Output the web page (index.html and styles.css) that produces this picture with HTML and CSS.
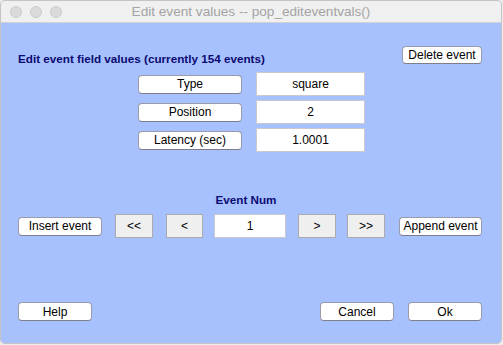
FILE: index.html
```html
<!DOCTYPE html>
<html>
<head>
    <title>Edit event values -- pop_editeventvals()</title>
    <link rel="stylesheet" href="styles.css">
</head>
<body>
    <div class="window">
        <div class="titlebar">
            <div class="lights">
                <span class="light"></span>
                <span class="light"></span>
                <span class="light"></span>
            </div>
            <div class="title">Edit event values -- pop_editeventvals()</div>
        </div>

        <div class="content">
            <!-- Заголовок и удаление -->
            <div class="top">
                <div class="heading">Edit event field values (currently 154 events)</div>
                <button class="btn delete">Delete event</button>
            </div>

            <!-- Поля события -->
            <div class="fields">
                <button class="btn">Type</button>
                <div class="field">square</div>
                <button class="btn">Position</button>
                <div class="field">2</div>
                <button class="btn">Latency (sec)</button>
                <div class="field">1.0001</div>
            </div>

            <div class="heading num-label">Event Num</div>

            <!-- Навигация -->
            <div class="nav">
                <button class="btn insert">Insert event</button>
                <button class="step first">&lt;&lt;</button>
                <button class="step prev">&lt;</button>
                <div class="field num">1</div>
                <button class="step next">&gt;</button>
                <button class="step last">&gt;&gt;</button>
                <button class="btn append">Append event</button>
            </div>

            <div class="bottom">
                <button class="btn wide">Help</button>
                <button class="btn wide cancel">Cancel</button>
                <button class="btn wide ok">Ok</button>
            </div>
        </div>
    </div>
</body>
</html>
```

FILE: styles.css
```css
body {
    margin: 0;
    background: #ededed;
    font-family: "Liberation Sans", Arial, sans-serif;
    font-size: 12px;
}
.window {
    box-sizing: border-box;
    width: 502px;
    height: 344px;
    border: 1px solid #c4c4c4;
    border-radius: 5px;
    overflow: hidden;
    background: #a7c0fe;
}
.titlebar {
    position: relative;
    height: 21px;
    background: #f0f0f0;
    border-bottom: 1px solid #d2d2d2;
}
.lights {
    display: flex;
    gap: 8px;
    padding: 5px 0 0 9px;
}
.light {
    box-sizing: border-box;
    width: 12px;
    height: 12px;
    border-radius: 50%;
    background: #dadada;
    border: 1px solid #cdcdcd;
}
.title {
    position: absolute;
    top: 0;
    left: 0;
    right: 0;
    text-align: center;
    line-height: 22px;
    font-size: 13.6px;
    color: #a4a4a4;
}
.content {
    padding: 0 0 0 17px;
}
button {
    font-family: inherit;
    font-size: 12px;
    color: #000;
    padding: 0;
    margin: 0;
}
.btn {
    box-sizing: border-box;
    height: 19px;
    background: #fff;
    border: 1px solid #9a9aa8;
    border-bottom-color: #7f7f8c;
    border-radius: 4px;
    line-height: 16px;
}
.top {
    display: flex;
    align-items: flex-end;
    margin-top: 23px;
    height: 18px;
}
.heading {
    font-weight: bold;
    color: #0b0b72;
    line-height: 14px;
    font-size: 11.7px;
}
.top .heading {
    margin-bottom: -2px;
}
.delete {
    width: 80px;
    margin-left: auto;
    margin-right: 19px;
    height: 18px;
    line-height: 15px;
}
.fields {
    display: grid;
    grid-template-columns: 104px 109px;
    grid-auto-rows: 24px;
    column-gap: 14px;
    row-gap: 4px;
    align-items: center;
    margin: 8px 0 0 120px;
}
.field {
    box-sizing: border-box;
    height: 24px;
    background: #fff;
    border: 1px solid #c9c9cf;
    text-align: center;
    line-height: 22px;
}
.num-label {
    text-align: center;
    margin: 41px 0 0 -17px;
    width: 490px;
}
.nav {
    display: flex;
    align-items: center;
    margin-top: 7px;
    height: 24px;
}
.insert {
    width: 84px;
}
.step {
    box-sizing: border-box;
    width: 38px;
    height: 24px;
    background: #efefef;
    border: 1px solid #ababab;
}
.first {
    margin-left: 13px;
}
.prev {
    margin-left: 13px;
    width: 37px;
}
.num {
    width: 72px;
    margin-left: 11px;
}
.next {
    margin-left: 12px;
}
.last {
    margin-left: 11px;
}
.append {
    width: 83px;
    margin-left: 14px;
}
.bottom {
    display: flex;
    margin-top: 64px;
}
.wide {
    width: 74px;
}
.cancel {
    margin-left: auto;
}
.ok {
    margin-left: 14px;
    margin-right: 19px;
}
```
